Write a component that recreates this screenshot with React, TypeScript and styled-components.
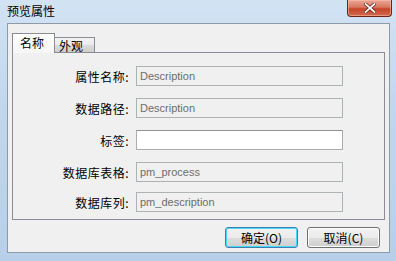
import styled, { createGlobalStyle } from 'styled-components';

const GlobalStyle = createGlobalStyle`
  html, body {
    margin: 0;
    padding: 0;
    background: #b9d1ea;
  }
  body {
    font-family: "Noto Sans CJK SC", "Noto Sans", sans-serif;
    font-size: 12px;
  }
`;

const Window = styled.div`
  width: 396px;
  height: 261px;
  display: flex;
  flex-direction: column;
  background: linear-gradient(180deg, #d2e3f4 0%, #c1d7ee 40%, #b7cfe9 100%);
  overflow: hidden;
`;

const TitleBar = styled.div`
  height: 23px;
  display: flex;
  justify-content: space-between;
  align-items: flex-start;
  padding: 0 4px 0 7px;
  flex: none;
`;

const Title = styled.div`
  font-size: 12px;
  line-height: 12px;
  margin-top: 5px;
  color: #000;
`;

const CloseButton = styled.div`
  width: 43px;
  height: 16px;
  border: 1px solid #6c2418;
  border-top: none;
  border-radius: 0 0 4px 4px;
  background: linear-gradient(180deg, #e9a797 0%, #d9775f 45%, #c7432a 55%, #d26a4d 100%);
  box-shadow: inset 0 0 0 1px rgba(255, 200, 180, 0.5);
  display: flex;
  align-items: center;
  justify-content: center;
`;

const Client = styled.div`
  flex: 1;
  margin: 0 6px 8px 7px;
  border: 1px solid #8e9aa8;
  background: #f0f0f0;
  display: flex;
  flex-direction: column;
  padding: 9px 4px 3px 4px;
`;

const TabStrip = styled.div`
  display: flex;
  align-items: flex-end;
  height: 20px;
  margin-bottom: -1px;
  position: relative;
  z-index: 1;
`;

const Tab = styled.div<{ $active?: boolean }>`
  height: ${(p) => (p.$active ? '20px' : '16px')};
  width: ${(p) => (p.$active ? '43px' : '41px')};
  box-sizing: border-box;
  border: 1px solid #898c95;
  border-bottom: ${(p) => (p.$active ? 'none' : '1px solid #898c95')};
  margin-left: ${(p) => (p.$active ? '0' : '-1px')};
  background: ${(p) =>
    p.$active
      ? 'linear-gradient(180deg, #ffffff 0%, #f6f6f6 100%)'
      : 'linear-gradient(180deg, #f3f3f3 0%, #ebebeb 50%, #dcdcdc 51%, #cfcfcf 100%)'};
  font-size: 12px;
  line-height: 14px;
  padding-left: ${(p) => (p.$active ? '7px' : '4px')};
  padding-top: ${(p) => (p.$active ? '2px' : '1px')};
  color: #000;
`;

const Panel = styled.div`
  border: 1px solid #898c95;
  height: 168px;
  box-sizing: border-box;
  background: #f0f0f0;
  padding: 13px 0 0 0;
  display: flex;
  flex-direction: column;
`;

const Row = styled.div<{ $top: number }>`
  display: flex;
  align-items: center;
  margin-top: ${(p) => p.$top}px;
  height: 20px;
`;

const Label = styled.div`
  width: 116px;
  text-align: right;
  font-size: 12px;
  color: #000;
  margin-right: 7px;
  white-space: nowrap;
  letter-spacing: 0.5px;
`;

const Field = styled.div<{ $disabled?: boolean }>`
  width: 207px;
  height: 20px;
  box-sizing: border-box;
  border: 1px solid ${(p) => (p.$disabled ? '#adb2b5' : '#abadb3')};
  border-top-color: ${(p) => (p.$disabled ? '#adb2b5' : '#8e9199')};
  background: ${(p) => (p.$disabled ? '#f0f0f0' : '#ffffff')};
  color: #6d6d6d;
  font-family: "Liberation Sans", Arial, sans-serif;
  font-size: 11px;
  line-height: 18px;
  padding-left: 3px;
`;

const Footer = styled.div`
  display: flex;
  justify-content: flex-end;
  gap: 9px;
  padding: 7px 5px 0 0;
`;

const Button = styled.div<{ $default?: boolean }>`
  width: 73px;
  height: 21px;
  box-sizing: border-box;
  border: 1px solid ${(p) => (p.$default ? '#3c7fb1' : '#707070')};
  border-radius: 3px;
  background: linear-gradient(180deg, #f2f2f2 0%, #ebebeb 50%, #dddddd 51%, #cfcfcf 100%);
  box-shadow: ${(p) =>
    p.$default ? 'inset 0 0 0 1px #48d8fb' : 'inset 0 0 0 1px #fcfcfc'};
  display: flex;
  align-items: center;
  justify-content: center;
  font-size: 12px;
  color: #000;
`;

const rows = [
  { label: '属性名称:', value: 'Description', disabled: true, top: 0 },
  { label: '数据路径:', value: 'Description', disabled: true, top: 12 },
  { label: '标签:', value: '', disabled: false, top: 12 },
  { label: '数据库表格:', value: 'pm_process', disabled: true, top: 12 },
  { label: '数据库列:', value: 'pm_description', disabled: true, top: 10 },
];

const App = () => {
  return (
    <>
      <GlobalStyle />
      <Window>
        <TitleBar>
          <Title>预览属性</Title>
          <CloseButton>
            <svg width="12" height="10" viewBox="0 0 12 10">
              <path
                d="M1.5 1 L10.5 9 M10.5 1 L1.5 9"
                stroke="#5a1a10"
                strokeWidth="3.2"
                strokeLinecap="square"
              />
              <path
                d="M1.5 1 L10.5 9 M10.5 1 L1.5 9"
                stroke="#ffffff"
                strokeWidth="1.8"
                strokeLinecap="square"
              />
            </svg>
          </CloseButton>
        </TitleBar>
        <Client>
          <TabStrip>
            <Tab $active>名称</Tab>
            <Tab>外观</Tab>
          </TabStrip>
          <Panel>
            {rows.map((row) => (
              <Row key={row.label} $top={row.top}>
                <Label>{row.label}</Label>
                <Field $disabled={row.disabled}>{row.value}</Field>
              </Row>
            ))}
          </Panel>
          <Footer>
            <Button $default>确定(O)</Button>
            <Button>取消(C)</Button>
          </Footer>
        </Client>
      </Window>
    </>
  );
};

export default App;
